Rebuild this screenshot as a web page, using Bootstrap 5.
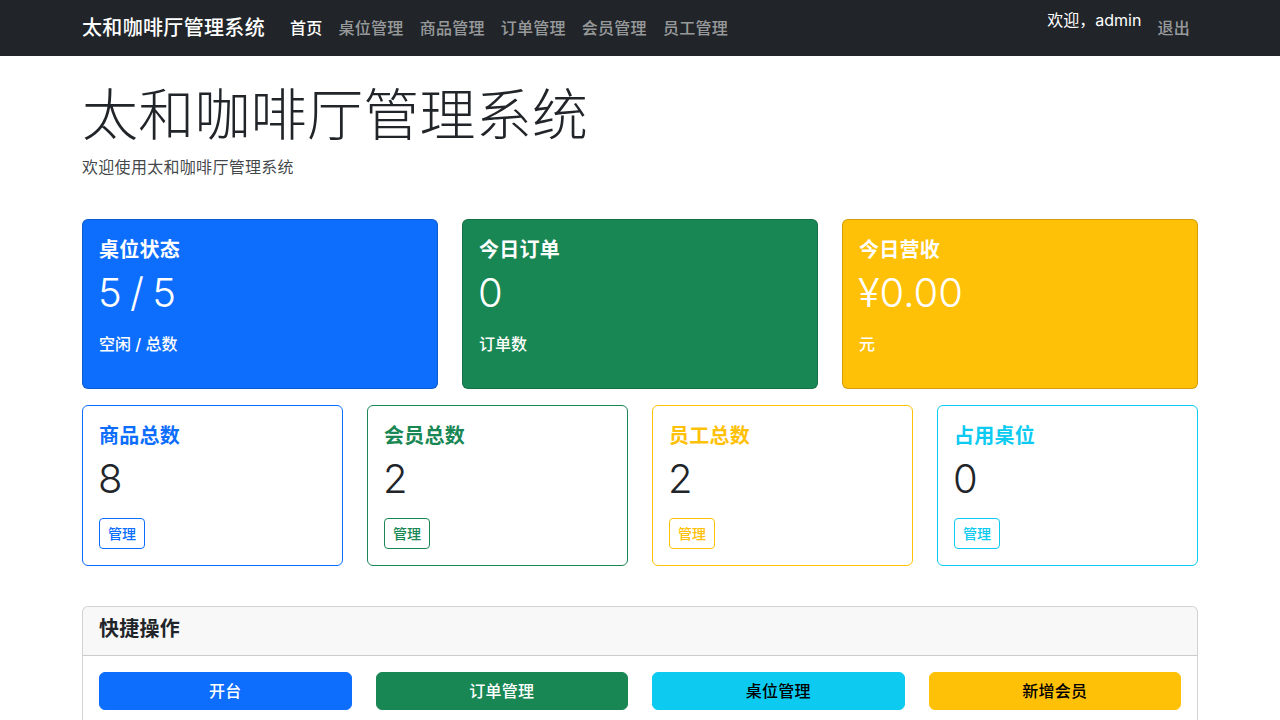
<!DOCTYPE html>
<html lang="zh">
<head>
    <meta charset="UTF-8">
    <meta name="viewport" content="width=device-width, initial-scale=1">
    <title>太和咖啡厅管理系统</title>
    <link href="https://cdn.jsdelivr.net/npm/bootstrap@5.3.0/dist/css/bootstrap.min.css" rel="stylesheet">
    <script src="https://cdn.jsdelivr.net/npm/bootstrap@5.3.0/dist/js/bootstrap.bundle.min.js"></script>
    <style>
        body { font-family: Inter, "Noto Sans CJK SC", sans-serif; letter-spacing: .25px; overflow: hidden; }
        .navbar { height: 56px; padding-top: 0; padding-bottom: 0; }
        .navbar-brand { font-weight: 500; letter-spacing: .33px; margin-right: 17px; }
        .navbar .nav-link { font-weight: 500; letter-spacing: .27px; }
        .navbar .nav-link.user-hello { color: #fff; font-weight: 400; letter-spacing: 0; padding-top: 0; padding-bottom: 16px; }
        .page-head { margin-bottom: 40px; }
        .page-title { line-height: 71px; margin-bottom: 4px; }
        .page-sub { color: rgba(33, 37, 41, .85); margin-bottom: 0; letter-spacing: .3px; }
        .card-title, .card-header h5 { font-weight: 600; line-height: 28px; margin-bottom: 4px; }
        .stat-num { letter-spacing: 0; word-spacing: -3px; text-indent: -1px; line-height: 49px; margin-bottom: 15px; }
        .stat-note { font-weight: 500; letter-spacing: 0; }
        .btn { font-weight: 500; }
        .btn-sm { letter-spacing: 0; }
    </style>
</head>
<body>
    <nav class="navbar navbar-expand-lg navbar-dark bg-dark">
        <div class="container">
            <a class="navbar-brand" href="#">太和咖啡厅管理系统</a>
            <ul class="navbar-nav me-auto">
                <li class="nav-item"><a class="nav-link active" href="#">首页</a></li>
                <li class="nav-item"><a class="nav-link" href="#">桌位管理</a></li>
                <li class="nav-item"><a class="nav-link" href="#">商品管理</a></li>
                <li class="nav-item"><a class="nav-link" href="#">订单管理</a></li>
                <li class="nav-item"><a class="nav-link" href="#">会员管理</a></li>
                <li class="nav-item"><a class="nav-link" href="#">员工管理</a></li>
            </ul>
            <ul class="navbar-nav">
                <li class="nav-item"><span class="nav-link user-hello">欢迎，admin</span></li>
                <li class="nav-item"><a class="nav-link" href="#">退出</a></li>
            </ul>
        </div>
    </nav>

    <div class="container mt-4">
        <div class="page-head">
            <h1 class="display-4 page-title">太和咖啡厅管理系统</h1>
            <p class="page-sub">欢迎使用太和咖啡厅管理系统</p>
        </div>

        <div class="row">
            <div class="col-md-4 mb-3"><div class="card text-bg-primary h-100"><div class="card-body">
                <h5 class="card-title">桌位状态</h5><p class="display-6 stat-num">5 / 5</p><p class="stat-note">空闲 / 总数</p>
            </div></div></div>
            <div class="col-md-4 mb-3"><div class="card text-bg-success h-100"><div class="card-body">
                <h5 class="card-title">今日订单</h5><p class="display-6 stat-num">0</p><p class="stat-note">订单数</p>
            </div></div></div>
            <div class="col-md-4 mb-3"><div class="card bg-warning text-white h-100"><div class="card-body">
                <h5 class="card-title">今日营收</h5><p class="display-6 stat-num">¥0.00</p><p class="stat-note">元</p>
            </div></div></div>
        </div>

        <div class="row mb-4">
            <div class="col-md-3 mb-3"><div class="card border-primary"><div class="card-body">
                <h5 class="card-title text-primary">商品总数</h5><p class="display-6 stat-num">8</p><a class="btn btn-sm btn-outline-primary" href="#">管理</a>
            </div></div></div>
            <div class="col-md-3 mb-3"><div class="card border-success"><div class="card-body">
                <h5 class="card-title text-success">会员总数</h5><p class="display-6 stat-num">2</p><a class="btn btn-sm btn-outline-success" href="#">管理</a>
            </div></div></div>
            <div class="col-md-3 mb-3"><div class="card border-warning"><div class="card-body">
                <h5 class="card-title text-warning">员工总数</h5><p class="display-6 stat-num">2</p><a class="btn btn-sm btn-outline-warning" href="#">管理</a>
            </div></div></div>
            <div class="col-md-3 mb-3"><div class="card border-info"><div class="card-body">
                <h5 class="card-title text-info">占用桌位</h5><p class="display-6 stat-num">0</p><a class="btn btn-sm btn-outline-info" href="#">管理</a>
            </div></div></div>
        </div>

        <div class="card">
            <div class="card-header"><h5>快捷操作</h5></div>
            <div class="card-body">
                <div class="row">
                    <div class="col-md-3"><a class="btn btn-primary w-100" href="#">开台</a></div>
                    <div class="col-md-3"><a class="btn btn-success w-100" href="#">订单管理</a></div>
                    <div class="col-md-3"><a class="btn btn-info w-100" href="#">桌位管理</a></div>
                    <div class="col-md-3"><a class="btn btn-warning w-100" href="#">新增会员</a></div>
                </div>
            </div>
        </div>
    </div>
</body>
</html>
